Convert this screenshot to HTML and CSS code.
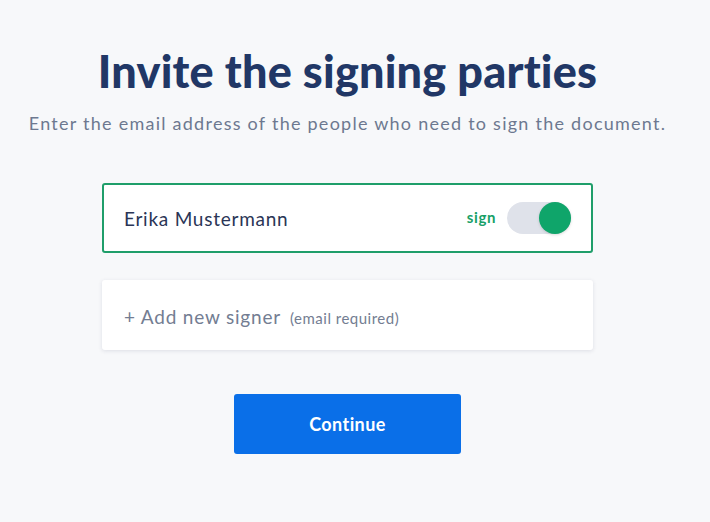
FILE: index.html
```html
<!DOCTYPE html>
<html lang="en">
<head>
<meta charset="utf-8">
<title>Invite the signing parties</title>
<link rel="stylesheet" href="styles.css">
</head>
<body>
<main class="page">
  <h1 class="title">Invite the signing parties</h1>
  <p class="subtitle">Enter the email address of the people who need to sign the document.</p>
  <div class="signers">
    <div class="card card-active">
      <span class="name">Erika Mustermann</span>
      <div class="sign-control">
        <span class="sign-label">sign</span>
        <span class="toggle"><span class="knob"></span></span>
      </div>
    </div>
    <div class="card card-add">
      <span class="add-text">+ Add new signer</span>
      <span class="add-hint">(email required)</span>
    </div>
  </div>
  <button class="continue" type="button">Continue</button>
</main>
</body>
</html>
```
FILE: styles.css
```css
html, body {
  margin: 0;
  padding: 0;
  background: #f7f8fa;
}
body {
  font-family: "Lato", "Open Sans", sans-serif;
  width: 710px;
  height: 522px;
  overflow: hidden;
}
.page {
  box-sizing: border-box;
  width: 710px;
  display: flex;
  flex-direction: column;
  align-items: center;
  padding: 43px 15px 0 0;
}
.title {
  margin: 0;
  font-size: 45px;
  line-height: 56px;
  font-weight: 900;
  color: #213766;
  letter-spacing: 0.2px;
}
.subtitle {
  margin: 12px 0 0;
  font-size: 18px;
  line-height: 24px;
  color: #6d7890;
  letter-spacing: 1.25px;
  white-space: nowrap;
}
.signers {
  margin-top: 48px;
  display: flex;
  flex-direction: column;
  gap: 27px;
  width: 491px;
}
.card {
  box-sizing: border-box;
  height: 70px;
  background: #ffffff;
  border-radius: 3px;
  display: flex;
  align-items: center;
  padding: 0 20px 0 22px;
}
.card-active {
  border: 2px solid #1f9e6a;
  justify-content: space-between;
  padding-left: 20px;
}
.card-add {
  box-shadow: 0 1px 4px rgba(30, 45, 80, 0.12);
  padding-left: 22px;
  gap: 9px;
  align-items: baseline;
  padding-top: 25px;
}
.name {
  font-size: 19px;
  color: #2a3556;
  letter-spacing: 0.75px;
}
.sign-control {
  display: flex;
  align-items: center;
  gap: 11px;
}
.sign-label {
  font-size: 15px;
  font-weight: 700;
  color: #17a067;
  margin-top: -3px;
  letter-spacing: 0.6px;
}
.toggle {
  position: relative;
  width: 64px;
  height: 32px;
  border-radius: 16px;
  background: #dfe2ea;
}
.knob {
  position: absolute;
  right: 0;
  top: 0;
  width: 32px;
  height: 32px;
  border-radius: 50%;
  background: #0fa56a;
  box-shadow: 0 1px 3px rgba(0,0,0,0.15);
}
.add-text {
  font-size: 19px;
  color: #737d92;
  letter-spacing: 0.8px;
}
.add-hint {
  font-size: 15px;
  color: #737d92;
  letter-spacing: 0.5px;
}
.continue {
  margin-top: 44px;
  width: 227px;
  height: 60px;
  border: none;
  border-radius: 3px;
  background: #0a6fe8;
  color: #ffffff;
  font-family: "Lato", "Open Sans", sans-serif;
  font-size: 18px;
  font-weight: 700;
  letter-spacing: 0.4px;
  cursor: pointer;
}
```
